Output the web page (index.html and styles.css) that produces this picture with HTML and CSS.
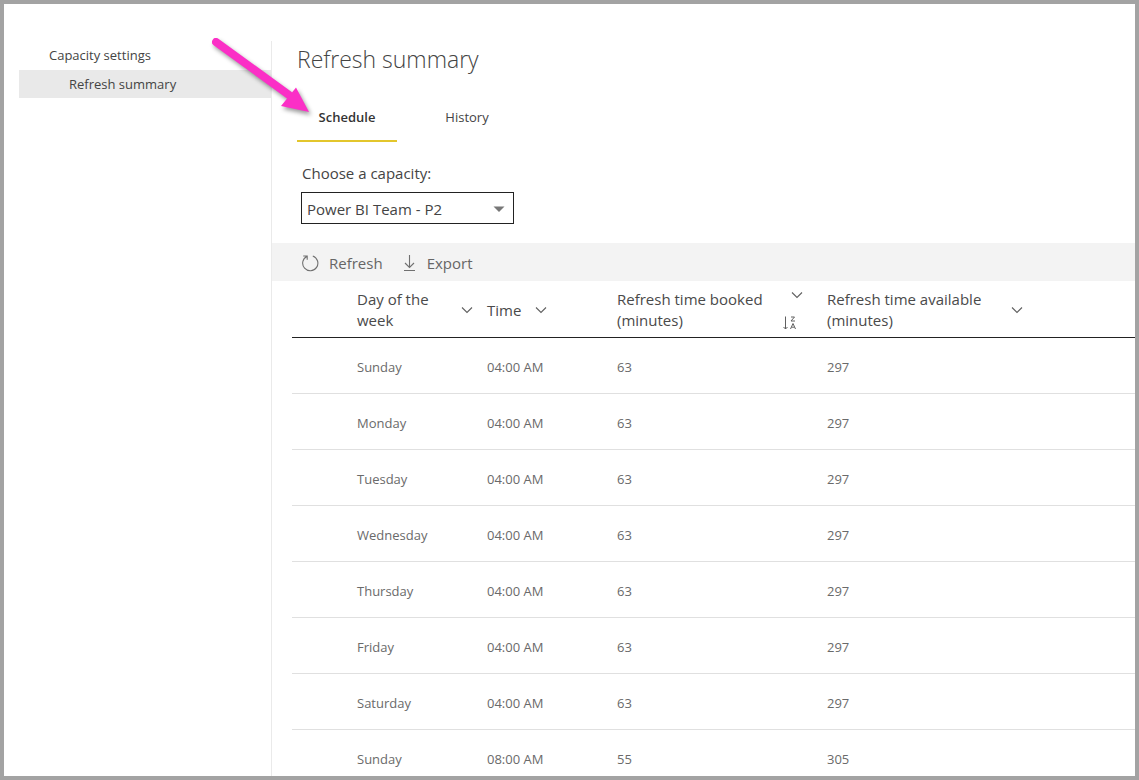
FILE: index.html
```html
<!DOCTYPE html>
<html lang="en">
<head>
<meta charset="utf-8">
<meta name="viewport" content="width=device-width, initial-scale=1">
<title>Refresh summary</title>
<link rel="stylesheet" href="styles.css">
</head>
<body>
<div class="frame">
  <nav class="sidebar">
    <a class="nav-link" href="#capacity">Capacity settings</a>
    <a class="nav-link nav-link-child" href="#refresh" aria-current="page">Refresh summary</a>
  </nav>
  <main class="main">
    <h1 class="title">Refresh summary</h1>
    <div class="tabs" role="tablist">
      <button class="tab tab-active" type="button" role="tab" aria-selected="true">Schedule</button>
      <button class="tab" type="button" role="tab" aria-selected="false">History</button>
    </div>
    <div class="field">
      <label class="field-label" for="capacity">Choose a capacity:</label>
      <div class="select-wrap">
        <select class="select" id="capacity"><option>Power BI Team - P2</option></select>
        <svg class="select-arrow" width="12" height="6" viewBox="0 0 12 6" aria-hidden="true"><path d="M0.5 0.5h11L6 6z" fill="#777"/></svg>
      </div>
    </div>
    <div class="toolbar">
      <button class="tool" type="button">
        <svg class="tool-icon" width="18" height="18" viewBox="0 0 18 18" aria-hidden="true"><path d="M5.800 2.400A7.600 7.600 0 1 0 11.800 2M2.200 2H6.200V5.800" fill="none" stroke="#707070" stroke-width="1.1"/></svg>
        Refresh
      </button>
      <button class="tool" type="button">
        <svg class="tool-icon" width="14" height="18" viewBox="0 0 14 18" aria-hidden="true"><path d="M6.500 1V13.500M2 9L6.500 13.500L11 9M1 16.500H12" fill="none" stroke="#707070" stroke-width="1.1"/></svg>
        Export
      </button>
    </div>
    <div class="table-wrap">
      <table class="table">
        <colgroup><col class="col-lead"><col class="col-short"><col class="col-short"><col class="col-long"><col></colgroup>
        <thead>
          <tr>
            <td></td>
            <th scope="col"><div class="head"><span class="head-text">Day of the week</span><svg class="chevron" width="12" height="8" viewBox="0 0 12 8" aria-hidden="true"><path d="M1 1.500L6 6.500L11 1.500"/></svg></div></th>
            <th scope="col"><div class="head head-tight"><span>Time</span><svg class="chevron" width="12" height="8" viewBox="0 0 12 8" aria-hidden="true"><path d="M1 1.500L6 6.500L11 1.500"/></svg></div></th>
            <th scope="col"><div class="head head-sorted"><span>Refresh time booked (minutes)</span><span class="head-icons"><svg class="chevron" width="12" height="8" viewBox="0 0 12 8" aria-hidden="true"><path d="M1 1.500L6 6.500L11 1.500"/></svg><svg class="sort" width="21" height="14" viewBox="0 0 21 14" aria-hidden="true"><path d="M3.500 0.500V13M1.500 11L3.500 13L5.500 11M9 1H12.500L9 5H13M8.500 13L11 7.500L13.500 13M9.500 11.200H12.500"/></svg></span></div></th>
            <th scope="col"><div class="head head-wide"><span>Refresh time available (minutes)</span><svg class="chevron" width="12" height="8" viewBox="0 0 12 8" aria-hidden="true"><path d="M1 1.500L6 6.500L11 1.500"/></svg></div></th>
          </tr>
        </thead>
        <tbody>
          <tr><td></td><td>Sunday</td><td>04:00 AM</td><td>63</td><td>297</td></tr>
          <tr><td></td><td>Monday</td><td>04:00 AM</td><td>63</td><td>297</td></tr>
          <tr><td></td><td>Tuesday</td><td>04:00 AM</td><td>63</td><td>297</td></tr>
          <tr><td></td><td>Wednesday</td><td>04:00 AM</td><td>63</td><td>297</td></tr>
          <tr><td></td><td>Thursday</td><td>04:00 AM</td><td>63</td><td>297</td></tr>
          <tr><td></td><td>Friday</td><td>04:00 AM</td><td>63</td><td>297</td></tr>
          <tr><td></td><td>Saturday</td><td>04:00 AM</td><td>63</td><td>297</td></tr>
          <tr><td></td><td>Sunday</td><td>08:00 AM</td><td>55</td><td>305</td></tr>
        </tbody>
      </table>
    </div>
  </main>
</div>
<svg class="pointer" width="120" height="90" viewBox="0 0 120 90" aria-hidden="true"><path d="M11 12L84 65" stroke="#fb2fc6" stroke-width="8" stroke-linecap="round"/><path d="M104 82L91 57.500L76 76z" fill="#fb2fc6"/></svg>
</body>
</html>
```
FILE: styles.css
```css
* { box-sizing: border-box; }

body {
  margin: 0;
  font-family: "Open Sans", "Noto Sans", sans-serif;
  font-size: 13px;
  color: #444;
  background: #fff;
}

button, select { font: inherit; color: inherit; }

.frame {
  display: flex;
  height: 100vh;
  border: 4px solid #a3a3a3;
  overflow: hidden;
}

.sidebar {
  flex: 0 0 268px;
  display: flex;
  flex-direction: column;
  gap: 1px;
  margin-top: 37px;
  padding-left: 15px;
  border-right: 1px solid #eaeaea;
}

.nav-link {
  padding-left: 30px;
  line-height: 28px;
  color: #444;
  text-decoration: none;
}

.nav-link-child {
  padding: 1px 0 0 50px;
  line-height: 27px;
  background: #e9e9e9;
}

.main { flex: 1; min-width: 0; }

.title {
  margin: 0;
  padding: 39px 25px 0;
  font-size: 23px;
  font-weight: 300;
  line-height: 32px;
}

.tabs {
  display: flex;
  gap: 20px;
  padding: 18px 25px 0;
}

.tab {
  width: 100px;
  height: 49px;
  padding: 1px 0 0;
  border: 0;
  border-bottom: 2px solid transparent;
  background: none;
}

.tab-active {
  border-color: #e3c62c;
  font-weight: 600;
  color: #333;
}

.field { padding: 19px 29px; }

.field-label {
  display: block;
  padding-left: 1px;
  margin-bottom: 7px;
  font-size: 15px;
  line-height: 24px;
}

.select-wrap {
  position: relative;
  width: 213px;
}

.select {
  display: block;
  width: 100%;
  height: 32px;
  padding: 2px 24px 0 5px;
  border: 1px solid #222;
  border-radius: 0;
  background: #fff;
  appearance: none;
  font-size: 15px;
}

.select-arrow {
  position: absolute;
  top: 14px;
  right: 9px;
  pointer-events: none;
}

.toolbar {
  display: flex;
  gap: 20px;
  height: 38px;
  padding-left: 29px;
  background: #f3f3f3;
}

.tool {
  display: flex;
  align-items: center;
  gap: 10px;
  padding: 1px 0 0;
  border: 0;
  background: none;
  font-size: 15px;
  color: #666;
}

.table-wrap { padding-left: 20px; }

.table {
  width: 100%;
  table-layout: fixed;
  border-collapse: separate;
  border-spacing: 0;
}

.col-lead { width: 65px; }
.col-short { width: 130px; }
.col-long { width: 210px; }

.table th, .table td {
  height: 56px;
  padding: 2px 0 0;
  text-align: left;
  border-bottom: 1px solid #e0e0e0;
  color: #6a6a6a;
}

.table thead th, .table thead td {
  height: 57px;
  border-bottom: 1px solid #222;
  font-size: 15px;
  font-weight: 400;
  line-height: 21px;
  color: #4a4a4a;
}

.head {
  display: flex;
  align-items: center;
  justify-content: space-between;
  padding-right: 14px;
}

.head-text { max-width: 90px; }
.head-tight { justify-content: flex-start; gap: 14px; }
.head-sorted { padding-right: 24px; }
.head-wide { width: 210px; }

.head-icons {
  display: flex;
  flex-direction: column;
  align-items: flex-end;
  gap: 17px;
}

.chevron { flex: none; fill: none; stroke: #606060; stroke-width: 1.1; }
.sort { flex: none; fill: none; stroke: #606060; stroke-width: 1; }

.pointer {
  position: absolute;
  top: 30px;
  left: 205px;
  filter: drop-shadow(2px 3px 2px rgba(0, 0, 0, 0.4));
  pointer-events: none;
}
```
